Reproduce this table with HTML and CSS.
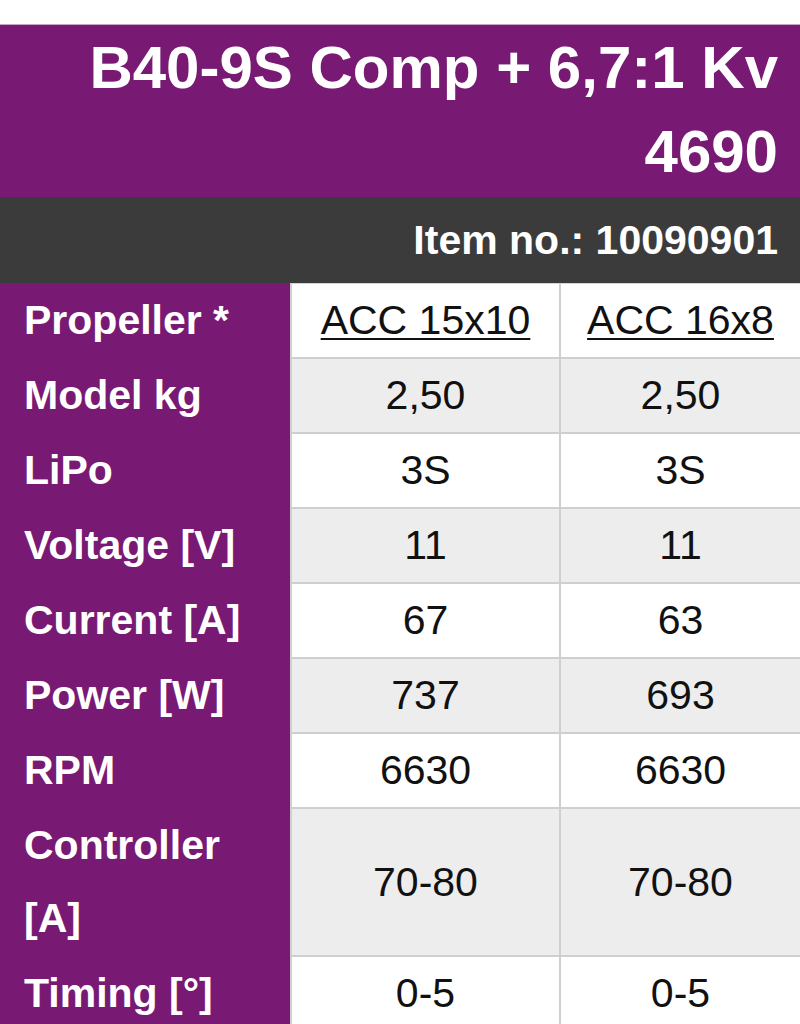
FILE: index.html
```html
<!DOCTYPE html>
<html lang="en">
<head>
<meta charset="utf-8">
<title>B40-9S Comp + 6,7:1 Kv 4690</title>
<link rel="stylesheet" href="styles.css">
</head>
<body>
<div class="page">
  <header class="product-head">
    <h1 class="title">B40-9S Comp + 6,7:1 Kv 4690</h1>
  </header>
  <div class="item-bar">Item no.: 10090901</div>
  <table class="specs">
    <tbody>
      <tr class="row first">
        <th class="label w-label">Propeller *</th>
        <td class="val w-c1"><a href="#" class="prop-link">ACC 15x10</a></td>
        <td class="val w-c2"><a href="#" class="prop-link">ACC 16x8</a></td>
      </tr>
      <tr class="row alt">
        <th class="label">Model kg</th>
        <td class="val">2,50</td>
        <td class="val">2,50</td>
      </tr>
      <tr class="row">
        <th class="label">LiPo</th>
        <td class="val">3S</td>
        <td class="val">3S</td>
      </tr>
      <tr class="row alt">
        <th class="label">Voltage [V]</th>
        <td class="val">11</td>
        <td class="val">11</td>
      </tr>
      <tr class="row">
        <th class="label">Current [A]</th>
        <td class="val">67</td>
        <td class="val">63</td>
      </tr>
      <tr class="row alt">
        <th class="label">Power [W]</th>
        <td class="val">737</td>
        <td class="val">693</td>
      </tr>
      <tr class="row">
        <th class="label">RPM</th>
        <td class="val">6630</td>
        <td class="val">6630</td>
      </tr>
      <tr class="row alt">
        <th class="label">Controller<br>[A]</th>
        <td class="val">70-80</td>
        <td class="val">70-80</td>
      </tr>
      <tr class="row">
        <th class="label">Timing [°]</th>
        <td class="val">0-5</td>
        <td class="val">0-5</td>
      </tr>
    </tbody>
  </table>
</div>
</body>
</html>
```

FILE: styles.css
```css
html, body {
  margin: 0;
  padding: 0;
  background: #ffffff;
}

body {
  font-family: "Liberation Sans", Arial, sans-serif;
  overflow: hidden;
}

.page {
  padding-top: 24px;
  width: 800px;
}

.product-head {
  background: #781a73;
  border-top: 1px solid #c9a4c7;
  padding: 1px 22px 3px 0;
}

.title {
  margin: 0;
  color: #ffffff;
  font-size: 60px;
  font-weight: bold;
  line-height: 84px;
  text-align: right;
}

.item-bar {
  background: #3b3b3b;
  color: #ffffff;
  font-size: 41px;
  font-weight: bold;
  line-height: 86px;
  text-align: right;
  padding-right: 22px;
}

.specs {
  border-collapse: separate;
  border-spacing: 0;
  table-layout: fixed;
  width: 800px;
  font-size: 41px;
}

.w-label { width: 290px; }
.w-c1 { width: 269px; }
.w-c2 { width: 241px; }

.specs th,
.specs td {
  box-sizing: border-box;
  padding: 0;
  line-height: 73px;
  vertical-align: middle;
}

.label {
  background: #781a73;
  color: #ffffff;
  font-weight: bold;
  text-align: left;
  padding-left: 24px !important;
  border-bottom: 2px solid #781a73;
}

.val {
  background: #ffffff;
  color: #111111;
  text-align: center;
  border-left: 2px solid #cfcfcf;
  border-bottom: 2px solid #cfcfcf;
}

.first .label {
  border-top: 1px solid #781a73;
}

.first .val {
  border-top: 1px solid #d4d4d4;
}

.alt .val {
  background: #ededed;
}

.prop-link {
  color: #111111;
  text-decoration: underline;
  text-decoration-thickness: 2px;
  text-underline-offset: 4px;
}
```
